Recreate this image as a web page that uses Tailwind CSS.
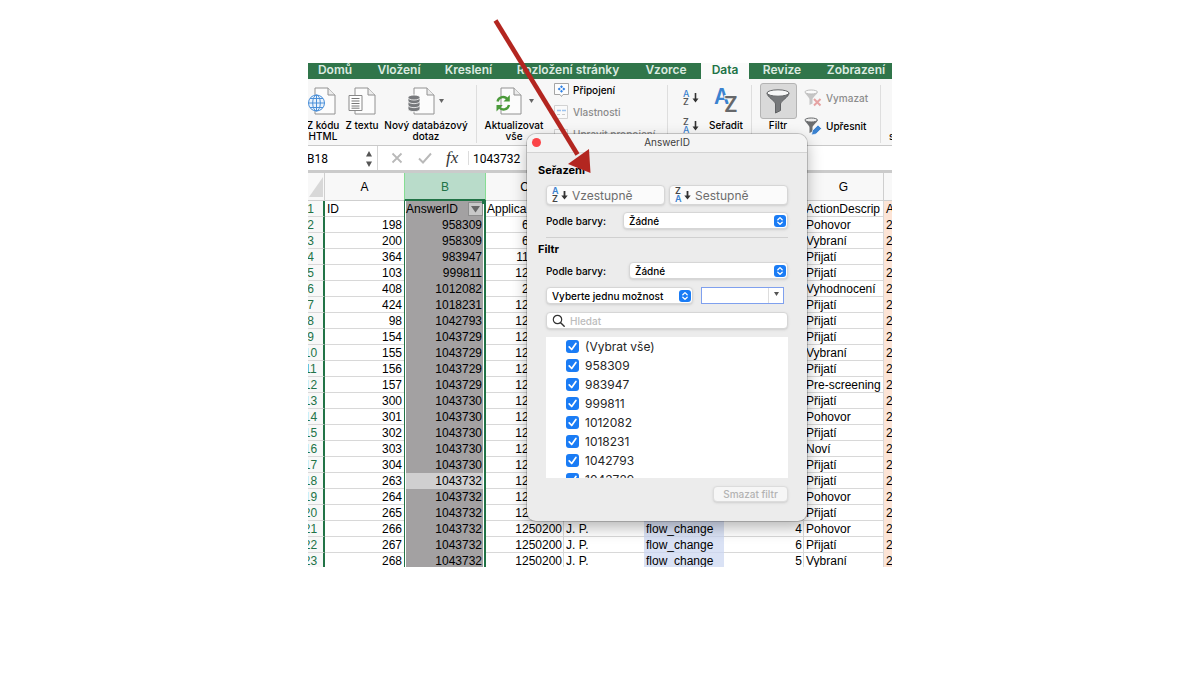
<!DOCTYPE html>
<html lang="cs">
<head>
<meta charset="utf-8">
<title>AnswerID</title>
<script src="https://cdn.jsdelivr.net/npm/@tailwindcss/browser@4"></script>
</head>
<body class="min-h-screen bg-white pt-[63px] font-['Inter',sans-serif] text-black">
<svg class="hidden">
  <symbol id="doc" viewBox="0 0 22 28"><path d="M1 1h13l7 7v19H1z" fill="#fcfcfc" stroke="#929292"/><path d="M14 1v7h7" fill="#ececec" stroke="#929292"/></symbol>
  <symbol id="updown" viewBox="0 0 12 12"><rect width="12" height="12" rx="3" fill="#1a7cf5"/><path d="M3.8 4.8 6 2.6l2.200 2.200M3.800 7.200 6 9.400l2.200-2.200" fill="none" stroke="#fff" stroke-width="1.300" stroke-linecap="round" stroke-linejoin="round"/></symbol>
</svg>
<main class="relative mx-auto w-full max-w-[584px]">
  <div class="overflow-hidden">
    <!-- ribbon tabs -->
    <nav class="flex h-4 bg-[#30754a] text-[12px] leading-[11px] font-semibold whitespace-nowrap text-[#dcebe1]">
      <button class="w-[54px] shrink-0 pb-1">Domů</button>
      <button class="w-[74px] shrink-0 pb-1">Vložení</button>
      <button class="w-[65px] shrink-0 pb-1">Kreslení</button>
      <button class="w-[134px] shrink-0 pb-1">Rozložení stránky</button>
      <button class="w-[62px] shrink-0 pb-1">Vzorce</button>
      <button class="ml-1 w-[48px] shrink-0 bg-[#fafafa] pb-1 text-[#217346]">Data</button>
      <button class="w-[66px] shrink-0 pb-1">Revize</button>
      <button class="w-[82px] shrink-0 pb-1">Zobrazení</button>
    </nav>
    <!-- ribbon -->
    <div class="flex h-[67px] items-start border-b border-[#c9c9c9] bg-[#f7f7f7] pt-1.5 text-[10px] leading-[11px] font-medium whitespace-nowrap">
      <button class="flex w-[30px] shrink-0 flex-col items-center gap-[5px]">
        <svg class="h-[30px] w-[30px]" viewBox="0 0 30 30"><use href="#doc" x="6" y="2" width="22" height="28"/><g fill="#eaf3fc" stroke="#4a8fd8"><circle cx="8.500" cy="18" r="8"/><ellipse cx="8.500" cy="18" rx="3.800" ry="8" fill="none"/><path d="M.5 18h16M8.500 10v16M2 13.500h13M2 22.500h13"/></g></svg>
        <span>Z kódu<br>HTML</span>
      </button>
      <button class="ml-1 flex w-[40px] shrink-0 flex-col items-center gap-[5px]">
        <svg class="h-[30px] w-7" viewBox="0 0 28 30"><use href="#doc" x="6" y="2" width="22" height="28"/><path d="M1 10.500h13v15H1z" fill="#fff" stroke="#888"/><path d="M3.500 13.500h8M3.500 16h8M3.500 18.500h8M3.500 21h8M3.500 23.200h8" stroke="#777"/></svg>
        <span>Z textu</span>
      </button>
      <button class="ml-0.5 flex w-[84px] shrink-0 flex-col items-center gap-[5px]">
        <svg class="h-[30px] w-9" viewBox="0 0 36 30"><use href="#doc" x="5" y="2" width="22" height="28"/><g fill="#77797c" stroke="#fff" stroke-width=".8"><path d="M0 21v3c0 3.500 12 3.500 12 0v-3z"/><path d="M0 17v3c0 3.500 12 3.500 12 0v-3z"/><path d="M0 12.500v3.500c0 3.500 12 3.500 12 0v-3.500z"/><ellipse cx="6" cy="12.500" rx="6" ry="2.500"/></g><path d="M31 14h5l-2.500 4z" fill="#666"/></svg>
        <span>Nový databázový<br>dotaz</span>
      </button>
      <span class="ml-2 h-[58px] w-px shrink-0 bg-[#dedede]"></span>
      <button class="ml-2 flex w-[58px] shrink-0 flex-col items-center gap-[5px]">
        <svg class="h-[30px] w-10" viewBox="0 0 40 30"><use href="#doc" x="6" y="2" width="22" height="28"/><path d="M3.500 16.500c1-5 7.500-6 10-2M15 20c-1 5-7.500 6-10 2" fill="none" stroke="#4b9a3a" stroke-width="2.300"/><path d="M15.800 10v6.500H9.500zM2.500 26.500V20h6.300z" fill="#4b9a3a"/><path d="M35 14h5l-2.500 4z" fill="#666"/></svg>
        <span>Aktualizovat<br>vše</span>
      </button>
      <div class="-mt-0.5 ml-[11px] flex w-[103px] shrink-0 flex-col gap-2 text-[#8a8a8a]">
        <button class="flex h-3.5 items-center gap-1 text-black"><svg class="h-3.5 w-[15px]" viewBox="0 0 15 14"><path d="M.5.500h14v11H9l-1.500 2-1.500-2H.5z" fill="#fdfdfd" stroke="#a5a5a5"/><path d="M7.500 2.200 9 3.700 7.500 5.200 6 3.700zM7.500 6.800 9 8.300 7.500 9.800 6 8.300zM5.200 4.500 6.700 6 5.200 7.500 3.700 6zM9.800 4.500 11.300 6 9.800 7.500 8.300 6z" fill="#2f80e4"/></svg>Připojení</button>
        <button disabled class="flex h-3.5 items-center gap-1"><svg class="h-3.5 w-[15px]" viewBox="0 0 15 14"><path d="M.5.500h13v13H.5z" fill="#fafafa" stroke="#d2d2d2"/><path d="M3 5.500h4M8 5.500h4" stroke="#9cc4f0" stroke-width="1.500"/><path d="M3 9.500h3M8 9.500h3" stroke="#ccc"/></svg>Vlastnosti</button>
        <button disabled class="flex h-3.5 items-center gap-1"><svg class="h-3.5 w-[15px]" viewBox="0 0 15 14"><path d="M.5 2.500h13v11H.5z" fill="#fafafa" stroke="#d2d2d2"/></svg>Upravit propojení</button>
      </div>
      <span class="ml-2.5 h-[58px] w-px shrink-0 bg-[#dedede]"></span>
      <div class="ml-3.5 flex w-[18px] shrink-0 flex-col gap-3">
        <button aria-label="Seřadit vzestupně"><svg class="mt-1 h-4 w-[18px] font-['Inter',sans-serif] text-[9px] font-medium" viewBox="0 0 18 16"><text x="1" y="7.500" fill="#3b82cf">A</text><text x="1" y="15.500" fill="#555">Z</text><path d="M13.500 4v8" stroke="#333" stroke-width="1.600"/><path d="M10.500 9.500h6l-3 4z" fill="#333"/></svg></button>
        <button aria-label="Seřadit sestupně"><svg class="h-4 w-[18px] font-['Inter',sans-serif] text-[9px] font-medium" viewBox="0 0 18 16"><text x="1" y="7.500" fill="#555">Z</text><text x="1" y="15.500" fill="#3b82cf">A</text><path d="M13.500 4v8" stroke="#333" stroke-width="1.600"/><path d="M10.500 9.500h6l-3 4z" fill="#333"/></svg></button>
      </div>
      <button class="ml-2 flex w-9 shrink-0 flex-col items-center gap-[5px]">
        <svg class="h-[30px] w-[26px] font-['Inter',sans-serif] text-[21px] font-semibold" viewBox="0 0 26 30"><text x="1" y="19" fill="#3b82d0">A</text><text x="11" y="27" fill="#66686b" stroke="#f7f7f7" stroke-width="2" paint-order="stroke">Z</text></svg>
        <span>Seřadit</span>
      </button>
      <span class="ml-[7px] h-[50px] w-px shrink-0 bg-[#dedede]"></span>
      <button class="-mt-0.5 ml-[7px] flex w-[38px] shrink-0 flex-col items-center gap-px">
        <span class="flex h-9 w-[37px] items-center justify-center rounded-[3px] border border-[#b4b4b4] bg-[#d9d9d9]"><svg class="h-[25px] w-6" viewBox="0 0 24 25"><path d="M1 4c0 4 8.500 8 8.500 11v9l5-2.500V15c0-3 8.500-7 8.500-11z" fill="#77797b" stroke="#606264"/><ellipse cx="12" cy="4" rx="11" ry="3.200" fill="#f7f7f7" stroke="#66686a"/></svg></span>
        <span>Filtr</span>
      </button>
      <div class="ml-[7px] flex w-[68px] shrink-0 flex-col gap-2.5 pt-1">
        <button disabled class="flex h-[18px] items-center gap-1 text-[#8c8c8c]"><svg class="h-[18px] w-[18px]" viewBox="0 0 18 18"><path d="M1 3c0 2.500 4.500 5 4.500 7.500V16l3-1.500v-4C8.500 8 13.500 5.500 13.500 3z" fill="#c6c6c6"/><ellipse cx="7.200" cy="3" rx="6.300" ry="2" fill="#fbfbfb" stroke="#bdbdbd"/><path d="m10 10 6.500 6.500m0-6.500L10 16.500" stroke="#e6a3a3" stroke-width="2"/></svg>Vymazat</button>
        <button class="flex h-[18px] items-center gap-1"><svg class="h-[18px] w-[18px]" viewBox="0 0 18 18"><path d="M1 3c0 2.500 4.500 5 4.500 7.500V16l3-1.500v-4C8.500 8 13.500 5.500 13.500 3z" fill="#6c6e70"/><ellipse cx="7.200" cy="3" rx="6.300" ry="2" fill="#eee" stroke="#66686a"/><path d="m8.500 13.500 5.500-5.500 3.500 3.500-5.500 5.500-4.500 1z" fill="#3b82d0" stroke="#fff" stroke-width=".6"/></svg>Upřesnit</button>
      </div>
      <span class="ml-2 h-[58px] w-px shrink-0 bg-[#dedede]"></span>
      <span class="ml-2 shrink-0 pt-[46px]">s</span>
    </div>
    <!-- formula bar -->
    <div class="flex h-6 items-center font-['Roboto',sans-serif] text-[12px]">
      <div class="-ml-px flex h-full w-[71px] shrink-0 items-center justify-between border-r border-[#d4d4d4] pt-0.5 pr-1"><span>B18</span><svg class="h-[18px] w-2" viewBox="0 0 8 18"><path d="M1 6.500h6L4 1zM1 11.500h6L4 17z" fill="#555"/></svg></div>
      <button class="ml-[13px] shrink-0" aria-label="Zrušit"><svg class="h-3 w-3" viewBox="0 0 12 12"><path d="m1.500 1.500 9 9m0-9-9 9" stroke="#b9b9b9" stroke-width="1.800"/></svg></button>
      <button class="ml-[15px] shrink-0" aria-label="Zadat"><svg class="h-3 w-[14px]" viewBox="0 0 14 12"><path d="m1 6.500 4 4 8-9" fill="none" stroke="#b9b9b9" stroke-width="1.900"/></svg></button>
      <span class="ml-3.5 w-4 shrink-0 font-['Liberation_Serif',serif] text-[17px] italic text-[#333]">fx</span>
      <span class="ml-1.5 h-3.5 w-px shrink-0 bg-[#dcdcdc]"></span>
      <span class="ml-1 pt-0.5">1043732</span>
    </div>
    <div class="h-[3px] bg-[#cbcbcb]"></div>
    <!-- worksheet -->
    <table class="-mb-0.5 -ml-2.5 w-[640px] table-fixed border-separate border-spacing-0 font-['Liberation_Sans',sans-serif] text-[12px] leading-[13px] whitespace-nowrap">
      <colgroup><col class="w-[27px]"><col class="w-[79px]"><col class="w-[82px]"><col class="w-[78px]"><col class="w-[80px]"><col class="w-[80px]"><col class="w-[80px]"><col class="w-[80px]"><col></colgroup>
      <thead>
        <tr class="h-7 bg-[#f8f8f8]">
          <th class="border-r border-b border-[#cfcfcf] p-0"><svg class="ml-auto h-[22px] w-4" viewBox="0 0 16 22"><path d="M15 1v20H1z" fill="#d8d8d8"/></svg></th>
          <th class="border-b border-[#cfcfcf] p-0 pt-0.5 font-normal">A</th>
          <th class="border-x border-b-2 border-x-[#86dd93] border-b-[#217346] bg-[#b9dcca] p-0 pt-0.5 font-normal text-[#217346]">B</th>
          <th class="border-r border-b border-[#cfcfcf] p-0 pt-0.5 font-normal">C</th>
          <th class="border-r border-b border-[#cfcfcf] p-0 pt-0.5 font-normal">D</th>
          <th class="border-r border-b border-[#cfcfcf] p-0 pt-0.5 font-normal">E</th>
          <th class="border-r border-b border-[#cfcfcf] p-0 pt-0.5 font-normal">F</th>
          <th class="border-r border-b border-[#cfcfcf] p-0 pt-0.5 font-normal">G</th>
          <th class="border-b border-[#cfcfcf] p-0"></th>
        </tr>
      </thead>
      <tbody id="rows">
        <tr>
          <th class="border-r-2 border-b border-r-[#217346] border-b-[#d8d8d8] bg-[#f8f8f8] p-0 pt-0.5 font-normal text-[#217346]">1</th>
          <td class="border-b border-[#d8d8d8] p-0 pt-0.5 pl-0.5">ID</td>
          <td class="border-r-2 border-l border-[#217346] p-0 px-px"><div class="relative flex h-4 items-center justify-between bg-[#a3a1a2]"><span>AnswerID</span><button aria-label="Filtr AnswerID" class="flex h-3.5 w-[15px] items-center justify-center border border-[#8e8e8e] bg-[#c8c8c8]"><svg class="h-[7px] w-[9px]" viewBox="0 0 9 7"><path d="M0 0h9L4.500 6.500z" fill="#666"/></svg></button><span class="absolute -top-px -right-[3px] size-1 bg-[#217346]"></span></div></td>
          <td class="overflow-hidden border-b border-[#d8d8d8] p-0 pt-0.5 pl-px">Applica</td>
          <td class="border-b border-[#d8d8d8] p-0"></td><td class="border-b border-[#d8d8d8] p-0"></td><td class="border-b border-[#d8d8d8] p-0"></td>
          <td class="overflow-hidden border-r border-b border-[#d8d8d8] p-0 pt-0.5 pl-0.5">ActionDescrip</td>
          <td class="bg-[#fce4d6] p-0 pt-px pl-0.5">A</td>
        </tr>
      </tbody>
    </table>
  </div>

  <!-- filter dialog -->
  <section role="dialog" aria-label="AnswerID" class="absolute top-[71px] left-[219px] w-[280px] overflow-hidden rounded-[9px] bg-[#ececec] text-[10px] leading-4 font-medium shadow-[0_0_0_1px_rgba(0,0,0,0.18),0_6px_16px_rgba(0,0,0,0.3)]">
    <header class="relative h-[19px] border-b border-[#d3d3d3] bg-[#f4f4f4] text-center leading-4 font-normal text-[#3d3d3d]">
      <button aria-label="Zavřít" class="absolute top-1 left-[5px] size-[9px] rounded-full bg-[#fb4448]"></button>AnswerID
    </header>
    <div class="px-[19px] pt-[9px] pb-[19px]">
      <h2 class="-ml-2 text-[11px] font-bold">Seřazení</h2>
      <div class="mt-[7px] flex gap-1 text-[12px] font-normal text-[#6d6d6d]">
        <button class="flex h-5 flex-1 items-center gap-[3px] rounded-[4px] border border-[#d6d6d6] bg-[#fbfbfb] pl-1 shadow-sm"><svg class="h-4 w-[18px] font-['Inter',sans-serif] text-[9px] font-semibold" viewBox="0 0 18 16"><text x="1" y="7" fill="#3b82cf">A</text><text x="1" y="15" fill="#444">Z</text><path d="M13.500 4v7" stroke="#333" stroke-width="1.800"/><path d="M10.300 8.500h6.400l-3.200 4z" fill="#333"/></svg><span class="pt-0.5">Vzestupně</span></button>
        <button class="flex h-5 flex-1 items-center gap-[3px] rounded-[4px] border border-[#d6d6d6] bg-[#fbfbfb] pl-1 shadow-sm"><svg class="h-4 w-[18px] font-['Inter',sans-serif] text-[9px] font-semibold" viewBox="0 0 18 16"><text x="1" y="7" fill="#444">Z</text><text x="1" y="15" fill="#3b82cf">A</text><path d="M13.500 4v7" stroke="#333" stroke-width="1.800"/><path d="M10.300 8.500h6.400l-3.200 4z" fill="#333"/></svg><span class="pt-0.5">Sestupně</span></button>
      </div>
      <div class="mt-[7px] flex items-center justify-between"><label for="sortColor">Podle barvy:</label>
        <div class="relative w-[165px]"><select id="sortColor" class="block h-[17px] w-full appearance-none rounded-[4px] border border-[#d6d6d6] bg-white pl-[5px] leading-[14px] shadow-sm"><option>Žádné</option></select><svg class="pointer-events-none absolute top-[3px] right-0.5 size-3"><use href="#updown"/></svg></div>
      </div>
      <hr class="mt-2 border-[#d0d0d0]">
      <h2 class="mt-[3px] -ml-2 text-[11px] font-bold">Filtr</h2>
      <div class="mt-[5px] flex items-center justify-between"><label for="filterColor">Podle barvy:</label>
        <div class="relative w-[159px]"><select id="filterColor" class="block h-[17px] w-full appearance-none rounded-[4px] border border-[#d6d6d6] bg-white pl-[5px] leading-[14px] shadow-sm"><option>Žádné</option></select><svg class="pointer-events-none absolute top-[3px] right-0.5 size-3"><use href="#updown"/></svg></div>
      </div>
      <div class="mt-2 flex items-center gap-2">
        <div class="relative w-[147px]"><select aria-label="Podmínka" class="block h-[17px] w-full appearance-none rounded-[4px] border border-[#d6d6d6] bg-white pl-[5px] leading-[14px] shadow-sm"><option>Vyberte jednu možnost</option></select><svg class="pointer-events-none absolute top-[3px] right-0.5 size-3"><use href="#updown"/></svg></div>
        <div class="flex h-[17px] w-[83px] border border-[#7fa0ee] bg-white"><input aria-label="Hodnota" class="w-full min-w-0 outline-none"><button aria-label="Hodnoty" class="flex w-[15px] shrink-0 items-center justify-center border-l border-[#ddd] pb-[3px]"><svg class="h-1 w-[5px]" viewBox="0 0 5 4"><path d="M0 0h5L2.500 4z" fill="#555"/></svg></button></div>
      </div>
      <label class="mt-2 flex h-[17px] items-center gap-[5px] rounded-[4px] border border-[#d6d6d6] bg-white pl-[5px] shadow-sm"><svg class="h-[13px] w-[13px] shrink-0" viewBox="0 0 13 13"><circle cx="5.500" cy="5.500" r="4.200" fill="none" stroke="#333" stroke-width="1.200"/><path d="m8.700 8.700 3.500 3.500" stroke="#333" stroke-width="1.400" stroke-linecap="round"/></svg><input type="search" aria-label="Hledat" placeholder="Hledat" class="h-[15px] w-full min-w-0 outline-none placeholder:text-[#bcbcbc]"></label>
      <ul id="values" class="mt-2 h-[141px] overflow-hidden bg-white pl-5 text-[12px] font-normal text-[#262626]"></ul>
      <div class="mt-2 flex justify-end"><button disabled class="h-4 w-[75px] rounded-[4px] border border-[#dcdcdc] bg-[#f6f6f6] leading-[14px] text-[#b3b3b3] shadow-sm">Smazat filtr</button></div>
    </div>
  </section>

  <!-- pointer arrow -->
  <svg class="pointer-events-none absolute -top-[46px] left-[182px] h-[160px] w-[106px]" viewBox="0 0 106 160"><path d="m5.500 3.500 82 134" stroke="#b32620" stroke-width="4.600"/><path d="M100.500 156 78 147 99 132z" fill="#b32620"/></svg>
</main>
<script>
const data = [
  [198,'958309','650200','Pohovor'],[200,'958309','650200','Vybraní'],[364,'983947','1150200','Přijatí'],[103,'999811','1250200','Přijatí'],
  [408,'1012082','250200','Vyhodnocení'],[424,'1018231','1250200','Přijatí'],[98,'1042793','1250200','Přijatí'],[154,'1043729','1250200','Přijatí'],
  [155,'1043729','1250200','Vybraní'],[156,'1043729','1250200','Přijatí'],[157,'1043729','1250200','Pre-screening'],[300,'1043730','1250200','Přijatí'],
  [301,'1043730','1250200','Pohovor'],[302,'1043730','1250200','Přijatí'],[303,'1043730','1250200','Noví'],[304,'1043730','1250200','Přijatí'],
  [263,'1043732','1250200','Přijatí'],[264,'1043732','1250200','Pohovor'],[265,'1043732','1250200','Přijatí'],
  [266,'1043732','1250200','Pohovor',4],[267,'1043732','1250200','Přijatí',6],[268,'1043732','1250200','Vybraní',5]];
document.getElementById('rows').insertAdjacentHTML('beforeend', data.map((r, i) => `<tr>
<th class="border-r-2 border-b border-r-[#217346] border-b-[#d8d8d8] bg-[#f8f8f8] p-0 pt-0.5 font-normal text-[#217346]">${i + 2}</th>
<td class="border-b border-[#d8d8d8] p-0 pt-0.5 pr-0.5 text-right">${r[0]}</td>
<td class="border-r-2 border-l border-[#217346] p-0 px-px text-right leading-[17px]"><div class="${i === 16 ? 'h-4 bg-[#d0cfd0] pr-px' : 'h-4 bg-[#a3a1a2] pr-px'}">${r[1]}</div></td>
<td class="border-r border-b border-[#d8d8d8] p-0 pt-0.5 pr-px text-right">${r[2]}</td>
<td class="border-b border-[#d8d8d8] p-0 pt-0.5 pl-0.5">${r[4] ? 'J. P.' : ''}</td>
<td class="border-b border-[#cfd7ec] bg-[#dae2f5] p-0 pt-0.5 pl-0.5">${r[4] ? 'flow_change' : ''}</td>
<td class="border-r border-b border-[#d8d8d8] p-0 pt-0.5 pr-px text-right">${r[4] || ''}</td>
<td class="border-r border-b border-[#d8d8d8] p-0 pt-0.5 pl-0.5">${r[3]}</td>
<td class="bg-[#fce4d6] p-0 pt-px pl-0.5">2</td></tr>`).join(''));
document.getElementById('values').innerHTML = ['(Vybrat vše)','958309','983947','999811','1012082','1018231','1042793','1043729'].map(v =>
`<li><label class="flex h-[19px] items-center gap-1.5"><span class="relative size-[13px]"><input type="checkbox" checked class="block size-[13px] appearance-none rounded-[3px] bg-[#1a7cf5]"><svg class="pointer-events-none absolute inset-0 size-[13px]" viewBox="0 0 13 13"><path d="m3.200 6.800 2.500 2.700 4.200-6" fill="none" stroke="#fff" stroke-width="1.700" stroke-linecap="round" stroke-linejoin="round"/></svg></span>${v}</label></li>`).join('');
</script>
</body>
</html>
